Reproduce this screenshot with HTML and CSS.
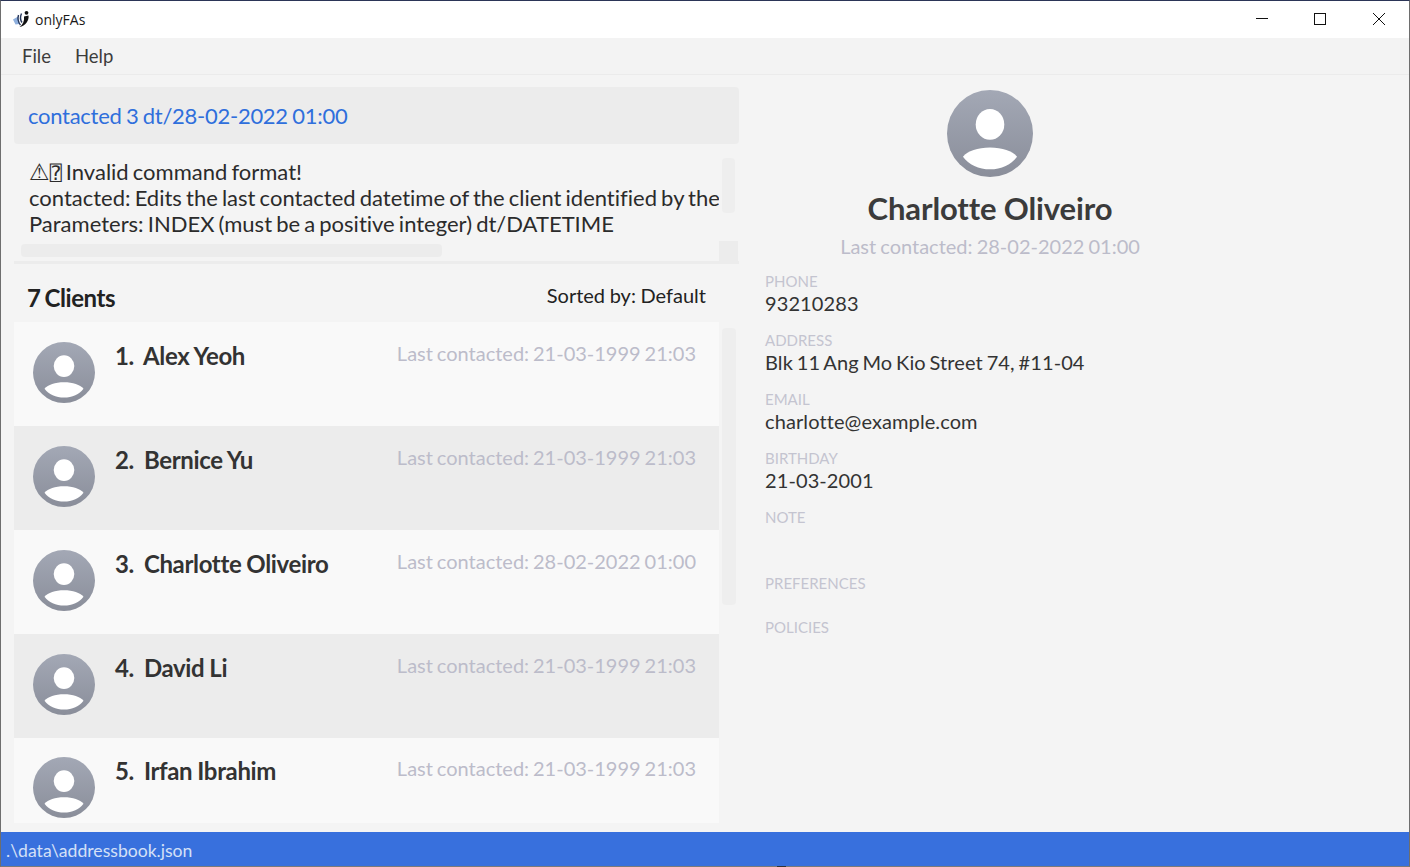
FILE: index.html
```html
<!DOCTYPE html>
<html lang="en">
<head>
<meta charset="utf-8">
<title>onlyFAs</title>
<link rel="stylesheet" href="styles.css">
</head>
<body>
<svg class="defs" width="0" height="0" aria-hidden="true">
  <defs>
    <linearGradient id="avatar-grad" x1="0" y1="0" x2="0" y2="1">
      <stop offset="0" stop-color="#a3a8b5"/>
      <stop offset="1" stop-color="#8a8e9a"/>
    </linearGradient>
    <symbol id="avatar" viewBox="0 0 62 62" preserveAspectRatio="none">
      <circle cx="31" cy="31" r="31" fill="url(#avatar-grad)"/>
      <ellipse cx="31" cy="24.5" rx="10.3" ry="11" fill="#fff"/>
      <path d="M11.5 47.5C15 43.5 22 41 31 41s16 2.500 19.500 6.500C46.500 53 39 56.500 31 56.500S15.500 53 11.500 47.500Z" fill="#fff"/>
    </symbol>
  </defs>
</svg>
<div class="window">
  <header class="titlebar">
    <svg class="app-icon" viewBox="0 0 18 18" aria-hidden="true">
      <path d="M1 9.500L6 6.500l1.500 7.500-4 .5z" fill="#8fb0de"/>
      <path d="M6.500 5c-1 3.500-.5 7 2 10M9.500 3.500c-1.500 3.500-1 7 .5 9" fill="none" stroke="#26365a" stroke-width="1.400"/>
      <circle cx="14.500" cy="2.800" r="1.900" fill="#111"/>
      <path d="M16.500 5.500c.8 5-3 10.500-9 11.500 3.500-2.500 5-6 4.500-10.500z" fill="#111"/>
    </svg>
    <span class="app-name">onlyFAs</span>
    <div class="window-controls">
      <svg class="win-btn" viewBox="0 0 58 37" aria-hidden="true"><path d="M23 17.500h12" stroke="#111" fill="none"/></svg>
      <svg class="win-btn" viewBox="0 0 58 37" aria-hidden="true"><rect x="23.500" y="12.500" width="11" height="11" stroke="#111" fill="none"/></svg>
      <svg class="win-btn" viewBox="0 0 58 37" aria-hidden="true"><path d="M24 12l12 12M36 12l-12 12" stroke="#111" fill="none"/></svg>
    </div>
  </header>
  <nav class="menubar">
    <span class="menu-item">File</span>
    <span class="menu-item">Help</span>
  </nav>
  <main class="content">
    <section class="left">
      <div class="command">contacted 3 dt/28-02-2022 01:00</div>
      <div class="result">
        <div class="result-view">
          <div class="result-text"><span class="warn">⚠</span><span class="tofu">⍰</span> Invalid command format!</div>
          <div class="result-text">contacted: Edits the last contacted datetime of the client identified by the</div>
          <div class="result-text">Parameters: INDEX (must be a positive integer) dt/DATETIME</div>
        </div>
        <div class="vbar result-vbar"></div>
        <div class="hbar"></div>
        <div class="corner"></div>
      </div>
      <div class="list-head">
        <span class="count">7 Clients</span>
        <span class="sorted">Sorted by: Default</span>
      </div>
      <div class="list-wrap">
        <ul class="list">
          <li class="row">
            <svg class="row-avatar"><use href="#avatar"/></svg>
            <span class="row-name">1.&nbsp; Alex Yeoh</span>
            <span class="row-date">Last contacted: 21-03-1999 21:03</span>
          </li>
          <li class="row alt">
            <svg class="row-avatar"><use href="#avatar"/></svg>
            <span class="row-name">2.&nbsp; Bernice Yu</span>
            <span class="row-date">Last contacted: 21-03-1999 21:03</span>
          </li>
          <li class="row">
            <svg class="row-avatar"><use href="#avatar"/></svg>
            <span class="row-name">3.&nbsp; Charlotte Oliveiro</span>
            <span class="row-date">Last contacted: 28-02-2022 01:00</span>
          </li>
          <li class="row alt">
            <svg class="row-avatar"><use href="#avatar"/></svg>
            <span class="row-name">4.&nbsp; David Li</span>
            <span class="row-date">Last contacted: 21-03-1999 21:03</span>
          </li>
          <li class="row">
            <svg class="row-avatar"><use href="#avatar"/></svg>
            <span class="row-name">5.&nbsp; Irfan Ibrahim</span>
            <span class="row-date">Last contacted: 21-03-1999 21:03</span>
          </li>
        </ul>
        <div class="vbar list-vbar"></div>
      </div>
    </section>
    <section class="detail">
      <div class="profile">
        <svg class="detail-avatar"><use href="#avatar"/></svg>
        <h1 class="detail-name">Charlotte Oliveiro</h1>
        <p class="detail-date">Last contacted: 28-02-2022 01:00</p>
      </div>
      <div class="field"><div class="label">PHONE</div><div class="value">93210283</div></div>
      <div class="field"><div class="label">ADDRESS</div><div class="value">Blk 11 Ang Mo Kio Street 74, #11-04</div></div>
      <div class="field"><div class="label">EMAIL</div><div class="value">charlotte@example.com</div></div>
      <div class="field"><div class="label">BIRTHDAY</div><div class="value">21-03-2001</div></div>
      <div class="field note"><div class="label">NOTE</div></div>
      <div class="field pref"><div class="label">PREFERENCES</div></div>
      <div class="field"><div class="label">POLICIES</div></div>
    </section>
  </main>
  <footer class="status">.\data\addressbook.json</footer>
  <div class="edge-mark"></div>
</div>
</body>
</html>
```
FILE: styles.css
```css
* { box-sizing: border-box; }
html, body { margin: 0; height: 100%; overflow: hidden; }
body { font-family: "Lato", "Liberation Sans", sans-serif; background: #f4f4f4; color: #2b2b2b; font-variant-ligatures: none; }
.defs { position: absolute; }
.window {
  position: relative;
  height: 867px;
  display: flex;
  flex-direction: column;
  border: 1px solid #6e6e6e;
  border-top-color: #2b3557;
  border-bottom-color: #7a7a7a;
}
.edge-mark { position: absolute; left: 776px; bottom: -1px; width: 9px; height: 1px; background: #333; }
.titlebar {
  height: 37px;
  flex: none;
  background: #fff;
  display: flex;
  align-items: center;
  padding-left: 11px;
}
.app-icon { width: 18px; height: 18px; margin-top: -2px; }
.app-name { font-family: "Open Sans", sans-serif; font-size: 14px; margin-left: 5px; color: #1a1a1a; }
.window-controls { margin-left: auto; display: flex; margin-right: 2px; }
.win-btn { width: 58px; height: 37px; }
.menubar {
  height: 37px;
  flex: none;
  display: flex;
  align-items: center;
  padding-left: 9px;
  border-bottom: 1px solid #ebebeb;
  background: #f3f3f3;
  font-size: 18.5px;
  color: #3c3c3c;
}
.menu-item { padding: 0 12px; }
.content { flex: 1; min-height: 0; display: flex; padding: 12px 0 9px 13px; }
.left { width: 725px; flex: none; display: flex; flex-direction: column; }
.command {
  height: 57px;
  flex: none;
  background: #ececec;
  border-radius: 4px;
  padding-left: 14px;
  font-size: 22px;
  line-height: 57px;
  letter-spacing: -0.27px;
  word-spacing: -1px;
  color: #2f6fdc;
}
.result {
  position: relative;
  height: 120px;
  flex: none;
  border-bottom: 3px solid #ececec;
}
.result-view { width: 705px; overflow: hidden; padding: 15px 0 0 15px; }
.result-text { font-size: 22px; line-height: 26px; white-space: nowrap; color: #2b2b2b; word-spacing: -1.5px; }
.warn { font-family: "DejaVu Sans", sans-serif; font-size: 23px; line-height: 0; }
.tofu { font-family: "DejaVu Sans Mono", monospace; font-size: 20px; line-height: 0; }
.vbar { position: absolute; background: #eeeeee; border-radius: 4px; width: 13px; }
.result-vbar { left: 708px; top: 14px; height: 55px; }
.hbar { position: absolute; left: 7px; top: 100px; width: 421px; height: 13px; background: #ececec; border-radius: 4px; }
.corner { position: absolute; left: 705px; top: 97px; width: 19px; height: 20px; background: #ececec; }
.list-head {
  height: 58px;
  flex: none;
  display: flex;
  align-items: center;
  justify-content: space-between;
  padding: 0 33px 0 13px;
}
.count { font-size: 24px; font-weight: 700; color: #222; letter-spacing: -0.4px; word-spacing: -1.5px; margin-top: 8px; }
.sorted { font-size: 20px; color: #222; margin-top: 4px; word-spacing: -0.5px; }
.list-wrap { position: relative; height: 501px; flex: none; }
.list { list-style: none; margin: 0; padding: 0; width: 705px; height: 501px; overflow: hidden; background: #f9f9f9; }
.row { height: 104px; display: flex; align-items: flex-start; background: #f9f9f9; padding: 20px 23px 0 19px; }
.row:last-child { height: 85px; padding-top: 19px; }
.alt { background: #ececec; }
.row-avatar { width: 62px; height: 61px; flex: none; }
.row-name { font-size: 24px; font-weight: 700; color: #333; margin-left: 20px; margin-top: -1px; letter-spacing: -0.35px; word-spacing: -0.5px; }
.row-date { font-size: 20px; color: #bcbcca; margin-left: auto; margin-top: -1px; word-spacing: -1.2px; }
.list-vbar { left: 708px; top: 6px; height: 277px; width: 14px; }
.detail { flex: 1; padding: 3px 0 0 26px; }
.profile { display: flex; flex-direction: column; align-items: center; width: 450px; }
.detail-avatar { width: 86px; height: 87px; }
.detail-name { margin: 11px 0 0; font-size: 31px; line-height: 40px; font-weight: 700; color: #3b3b3b; letter-spacing: -0.13px; }
.detail-date { margin: 6px 0 0; font-size: 20px; line-height: 24px; color: #bcbcca; word-spacing: -1px; }
.field + .field { margin-top: 15px; }
.profile + .field { margin-top: 13px; }
.label { font-size: 15px; line-height: 20px; color: #c4c4d0; }
.value { font-size: 20px; line-height: 24px; color: #333; word-spacing: -1.4px; letter-spacing: 0.1px; }
.field.note { margin-bottom: 46px; }
.field.pref { margin-bottom: 24px; }
.status {
  height: 34px;
  flex: none;
  background: #3870dd;
  color: #d4e0f7;
  font-size: 17.6px;
  line-height: 37px;
  padding-left: 5px;
}
```
